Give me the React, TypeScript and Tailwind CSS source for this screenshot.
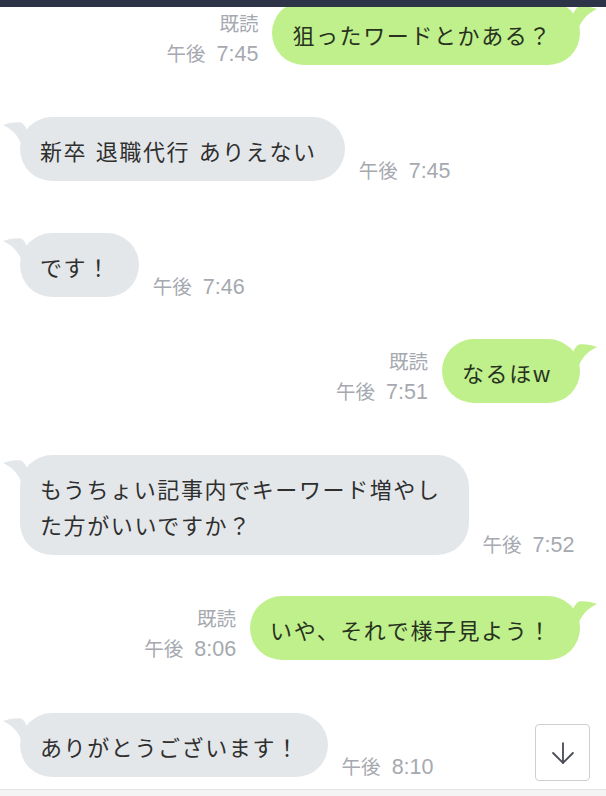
import React from 'react';
import { ArrowDown } from 'lucide-react';

type Msg = {
  side: 'left' | 'right';
  lines: string[];
  time: string;
  gap: string;
};

const messages: Msg[] = [
  { side: 'right', lines: ['狙ったワードとかある？'], time: '7:45', gap: 'mt-0' },
  { side: 'left', lines: ['新卒 退職代行 ありえない'], time: '7:45', gap: 'mt-[52px]' },
  { side: 'left', lines: ['です！'], time: '7:46', gap: 'mt-[52px]' },
  { side: 'right', lines: ['なるほw'], time: '7:51', gap: 'mt-[42px]' },
  { side: 'left', lines: ['もうちょい記事内でキーワード増やし', 'た方がいいですか？'], time: '7:52', gap: 'mt-[52px]' },
  { side: 'right', lines: ['いや、それで様子見よう！'], time: '8:06', gap: 'mt-[41px]' },
  { side: 'left', lines: ['ありがとうございます！'], time: '8:10', gap: 'mt-[53px]' },
];

const Tail: React.FC<{ side: 'left' | 'right'; color: string }> = ({ side, color }) => (
  <svg
    className={
      side === 'left'
        ? 'absolute left-[-20px] top-0 w-[40px] h-[40px]'
        : 'absolute right-[-20px] top-0 w-[40px] h-[40px] -scale-x-100'
    }
    viewBox="0 0 40 40"
  >
    <path d="M3 8 C8 6 16 4.5 21 5.5 C23.5 6.5 25 9 27 13 L27 36 L22 36 L22 30 C20 20 12 12 3 8 Z" fill={color} />
  </svg>
);

const Time: React.FC<{ text: string }> = ({ text }) => (
  <div className="flex items-baseline leading-[30px] text-[#a6a9b0] whitespace-nowrap">
    <span className="text-[19.5px]">午後</span>
    <span className="ml-[11px] font-['Liberation_Sans',sans-serif] text-[21.5px]">{text}</span>
  </div>
);

const Bubble: React.FC<{ m: Msg }> = ({ m }) => {
  const left = m.side === 'left';
  const color = left ? '#e4e7ea' : '#c0f08b';
  return (
    <div
      className={`relative rounded-[32px] pl-[20px] pr-[28px] pt-[15px] pb-[13px] text-[22px] leading-[36px] tracking-[1.6px] [word-spacing:2px] whitespace-nowrap ${
        left ? 'bg-[#e4e7ea] text-[#2f2f2f]' : 'bg-[#c0f08b] text-[#27321f]'
      }`}
    >
      <Tail side={m.side} color={color} />
      <div className="relative">
        {m.lines.map((l, i) => (
          <div key={i}>{l}</div>
        ))}
      </div>
    </div>
  );
};

export default function App() {
  return (
    <div className="relative w-[606px] h-[796px] overflow-hidden bg-white flex flex-col font-['Noto_Sans_CJK_JP',sans-serif]">
      <div className="relative z-10 h-[7px] bg-[#2d3447] shrink-0" />
      <div className="flex-1 flex flex-col -mt-[6px]">
        {messages.map((m, i) =>
          m.side === 'left' ? (
            <div key={i} className={`${m.gap} flex items-end pl-[20px]`}>
              <Bubble m={m} />
              <div className="ml-[14px] mb-[-5px]">
                <Time text={m.time} />
              </div>
            </div>
          ) : (
            <div key={i} className={`${m.gap} flex items-end justify-end pr-[26px]`}>
              <div className="mr-[14px] mb-[-4px] flex flex-col items-end">
                <div className="text-[19.5px] leading-[30px] text-[#a6a9b0]">既読</div>
                <Time text={m.time} />
              </div>
              <Bubble m={m} />
            </div>
          )
        )}
      </div>
      <div className="h-[7px] shrink-0 border-t border-[#e2e2e2] bg-[#f4f4f4]" />
      <button className="absolute right-[16px] bottom-[15px] w-[55px] h-[57px] bg-white border border-[#cfcfcf] rounded-[4px] flex items-center justify-center">
        <ArrowDown size={34} strokeWidth={1.3} color="#4a4d55" />
      </button>
    </div>
  );
}
